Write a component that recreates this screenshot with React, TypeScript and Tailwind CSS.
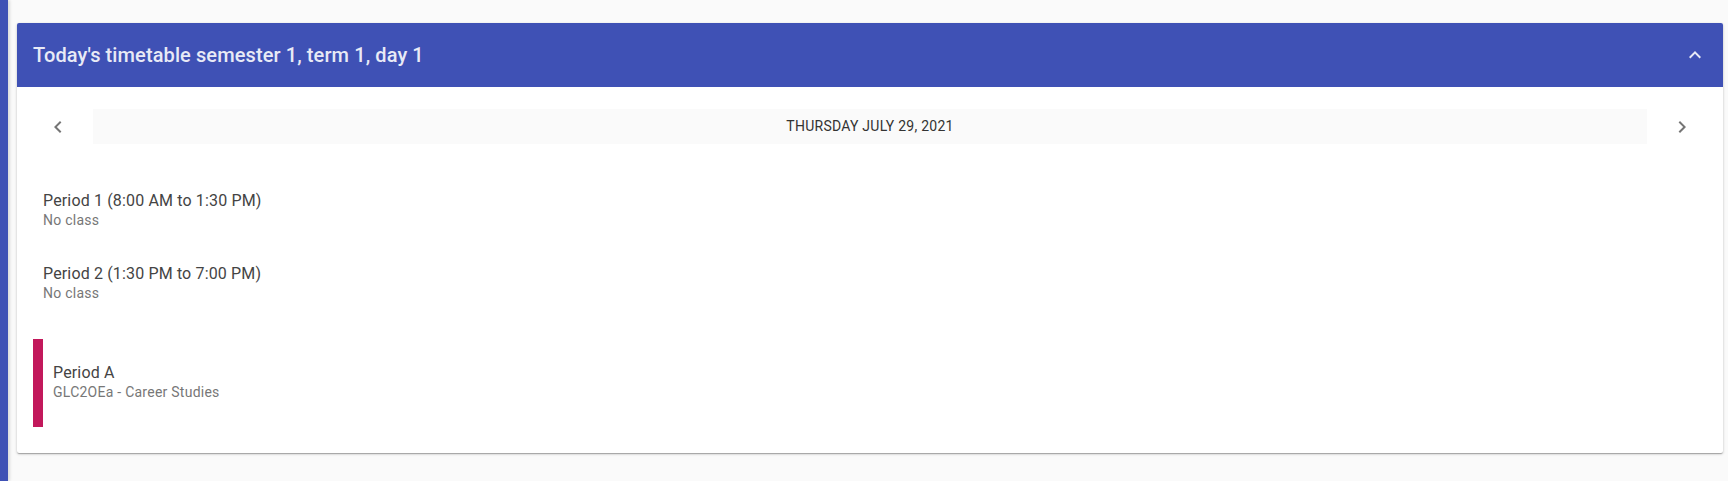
const periods = [
  { title: "Period 1 (8:00 AM to 1:30 PM)", sub: "No class" },
  { title: "Period 2 (1:30 PM to 7:00 PM)", sub: "No class" },
];

const ChevronLeft = () => (
  <svg viewBox="0 0 24 24" className="w-6 h-6 fill-[#757575]">
    <path d="M15.41 7.41L14 6l-6 6 6 6 1.41-1.41L10.83 12z" />
  </svg>
);

const ChevronRight = () => (
  <svg viewBox="0 0 24 24" className="w-6 h-6 fill-[#757575]">
    <path d="M8.59 16.59L10 18l6-6-6-6-1.41 1.41L13.17 12z" />
  </svg>
);

const ExpandLess = () => (
  <svg viewBox="0 0 24 24" className="w-6 h-6 fill-[#e8eaf6]">
    <path d="M12 8l-6 6 1.41 1.41L12 10.83l4.59 4.58L18 14z" />
  </svg>
);

export default function App() {
  return (
    <div className="flex min-h-[481px] bg-[#fafafa] font-['Roboto',sans-serif]">
      <div className="w-[8px] shrink-0 bg-[#3f51b5] shadow-[2px_0_3px_rgba(0,0,0,0.12)]" />
      <div className="flex-1 pl-[9px] pr-[5px] pt-[23px]">
        <div className="bg-white rounded-[2px] shadow-[0_1px_3px_rgba(0,0,0,0.2),0_1px_1px_rgba(0,0,0,0.14),0_2px_1px_-1px_rgba(0,0,0,0.12)] pb-[26px]">
          <div className="h-[64px] bg-[#3f51b5] flex items-center justify-between pl-[16px] pr-[16px] rounded-t-[2px]">
            <h2 className="text-[20px] font-medium text-[#e8eaf6] tracking-[0.1px]">
              Today's timetable semester 1, term 1, day 1
            </h2>
            <ExpandLess />
          </div>

          <div className="mt-[22px] flex items-center gap-[11px] px-[17px] h-[35px]">
            <button className="w-12 h-12 flex items-center justify-center shrink-0">
              <ChevronLeft />
            </button>
            <div className="flex-1 h-[35px] bg-[#fafafa] flex items-center justify-center text-[14px] tracking-[0.25px] text-[#333] uppercase">
              Thursday July 29, 2021
            </div>
            <button className="w-12 h-12 flex items-center justify-center shrink-0">
              <ChevronRight />
            </button>
          </div>

          <div className="pl-[26px] pt-[47px] flex flex-col gap-[34px]">
            {periods.map((p) => (
              <div key={p.title}>
                <div className="text-[16px] leading-[20px] tracking-[0.15px] text-[#444]">{p.title}</div>
                <div className="text-[14px] leading-[19px] tracking-[0.25px] text-[#777]">{p.sub}</div>
              </div>
            ))}
          </div>

          <div className="ml-[16px] mt-[36px] border-l-[10px] border-[#c2185b] pl-[10px] pt-[24px] pb-[25px]">
            <div className="text-[16px] leading-[20px] tracking-[0.15px] text-[#444]">Period A</div>
            <div className="text-[14px] leading-[19px] tracking-[0.25px] text-[#777]">GLC2OEa - Career Studies</div>
          </div>
        </div>
      </div>
    </div>
  );
}
